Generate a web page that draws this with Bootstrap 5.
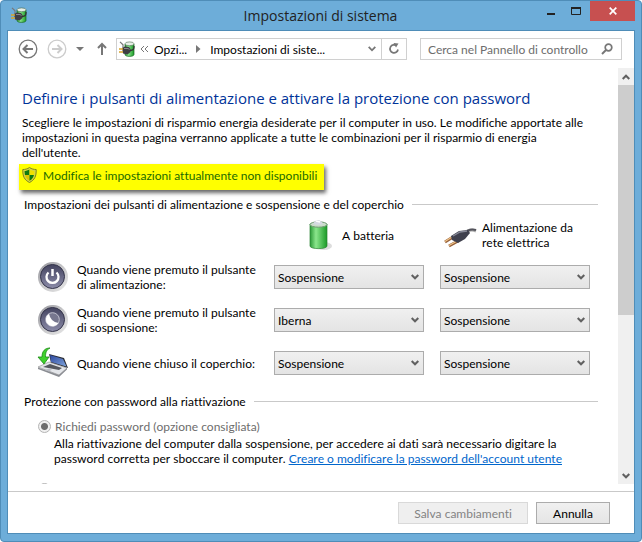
<!DOCTYPE html>
<html lang="it">
<head>
<meta charset="utf-8">
<meta name="viewport" content="width=device-width, initial-scale=1">
<title>Impostazioni di sistema</title>
<link rel="stylesheet" href="https://cdn.jsdelivr.net/npm/bootstrap@5.3.0/dist/css/bootstrap.min.css">
<style>
  :root { --frame: #6dadd9; --frame-edge: #4f8db8; --rule: #c9c9c9; }
  body { font-family: Lato, "Open Sans", sans-serif; font-size: 12px; line-height: 15px; font-variant-ligatures: none; font-kerning: none; color: #000; background: #fff; }
  svg { display: block; flex: none; }
  button { font: inherit; }
  .window { height: 100vh; background: var(--frame); border: 1px solid var(--frame-edge); border-radius: 4px; padding: 0 6px 7px; }
  .titlebar { height: 29px; flex: none; }
  .titlebar h1 { font-family: "Open Sans", sans-serif; font-size: 14px; line-height: 30px; font-weight: 400; color: #222; padding-left: 76px; }
  .caption-btn { border: 0; background: none; padding: 0; height: 20px; width: 25px; display: flex; align-items: center; justify-content: center; }
  .caption-close { background: #c75050; width: 45px; margin-left: 2px; }
  .client { border: 1px solid var(--frame-edge); background: #fff; min-height: 0; }
  .navrow { padding: 7px 12px 8px 10px; gap: 9px; }
  .bare { border: 0; background: none; padding: 0; color: #777; }
  .box { border: 1px solid #d0d0d0; height: 22px; }
  .address { gap: 5px; padding-left: 2px; }
  .refresh { border: 0; border-left: 1px solid #d0d0d0; background: none; width: 25px; height: 20px; padding: 0 6px; }
  .search { width: 202px; padding: 0 8px 0 7px; }
  .search input { border: 0; outline: 0; padding: 0; width: 100%; min-width: 0; color: #6d6d6d; background: none; font-variant-ligatures: none; }
  .search input::placeholder { color: #6d6d6d; opacity: 1; }
  .body-row { min-height: 0; margin-bottom: 7px; }
  .pane { min-height: 0; overflow: hidden; padding: 20px 20px 0 14px; }
  .pane h2 { font-family: "Open Sans", sans-serif; font-size: 15px; line-height: 20px; font-weight: 400; color: #039; margin: 0 0 7px; }
  .intro { margin: 0 0 4px; padding-right: 8px; }
  .uac { display: inline-flex; align-items: center; gap: 6px; background: #ff0; height: 26px; padding: 0 7px 4px 3px; margin-left: -3px; color: #1a6a00; text-decoration: none; box-shadow: 2px 3px 4px rgba(0,0,0,.6); }
  .group-head { font-size: 12px; font-weight: 400; line-height: 15px; margin: 7px 0 0; padding-left: 2px; gap: 8px; }
  .group-head::after { content: ""; flex: 1; border-top: 1px solid var(--rule); }
  .power-grid { display: grid; grid-template-columns: minmax(0, 1fr) 150px 150px; column-gap: 16px; row-gap: 13px; align-items: center; padding: 9px 8px 0 15px; }
  .power-grid .item { display: flex; align-items: center; gap: 8px; height: 30px; }
  .col-title { display: flex; align-items: center; height: 28px; }
  .combo { appearance: none; width: 100%; height: 24px; border: 1px solid #acacac; border-radius: 0; padding: 0 20px 0 3px; color: #000; font: inherit; font-variant-ligatures: none; font-kerning: none;
    background: url("data:image/svg+xml,%3Csvg xmlns='http://www.w3.org/2000/svg' width='8' height='6'%3E%3Cpath d='M.7 1L4 4.3 7.3 1' fill='none' stroke='%23606060' stroke-width='2'/%3E%3C/svg%3E") no-repeat right 4px center, linear-gradient(#f0f0f0, #e4e4e4); }
  .option { display: flex; align-items: center; gap: 4px; padding-left: 16px; margin-top: 10px; color: #6d6d6d; }
  .dial { appearance: none; width: 13px; height: 13px; border: 1px solid #b4b4b4; border-radius: 50%; margin: 0; background: #f4f4f4; flex: none; }
  .dial:checked { background: radial-gradient(circle, #6c6c6c 3px, #f0f0f0 4px); }
  .option-text { margin: 2px 0 17px 32px; }
  .option-text a { color: #06c; }
  .scrollbar { width: 16px; background: #f0f0f0; }
  .scrollbar button { height: 17px; display: flex; align-items: center; justify-content: center; }
  .thumb { flex: 231; background: #cdcdcd; }
  .track { flex: 152; }
  .actions { border-top: 1px solid var(--rule); padding: 10px 24px 9px; gap: 8px; }
  .cmd { height: 22px; border: 1px solid #acacac; background: linear-gradient(#f0f0f0, #e5e5e5); color: #000; width: 74px; padding: 0; }
  .cmd:disabled { background: #efefef; border-color: #d9d9d9; color: #838383; width: 130px; }
</style>
</head>
<body>
<svg width="0" height="0" class="position-absolute" aria-hidden="true">
  <defs>
    <linearGradient id="gGreen"><stop offset="0" stop-color="#2c9a38"/><stop offset=".35" stop-color="#8be68c"/><stop offset="1" stop-color="#1a9a26"/></linearGradient>
    <linearGradient id="gDial" x1="0" y1="0" x2="0" y2="1"><stop offset="0" stop-color="#43435f"/><stop offset="1" stop-color="#8c8ca9"/></linearGradient>
    <linearGradient id="gRing" x1="0" y1="0" x2="1" y2="1"><stop offset="0" stop-color="#8f8f96"/><stop offset=".5" stop-color="#c8c8ca"/><stop offset="1" stop-color="#e8e8e8"/></linearGradient>
    <linearGradient id="gScreen" x1="0" y1="0" x2="1" y2="1"><stop offset="0" stop-color="#2c479e"/><stop offset="1" stop-color="#7fa4dc"/></linearGradient>
    <symbol id="powerIcon" viewBox="0 0 16 16">
      <path d="M6 3v10.500c0 2.500 9 2.500 9 0V3z" fill="url(#gGreen)" stroke="#14661c" stroke-width=".7"/>
      <ellipse cx="10.500" cy="2.800" rx="4.500" ry="1.900" fill="#e8f0e8" stroke="#4d6b50" stroke-width=".6"/>
      <path d="M1 .8l3 3v3" fill="none" stroke="#777" stroke-width="1.200"/>
      <path d="M3 7l3-1.500 4 .5 1.500 2v3L8.500 13.500 4 12.500z" fill="#3e3e42"/>
      <path d="M5 7.500h4l1.500 1" fill="none" stroke="#99999e" stroke-width=".8"/>
      <path d="M0 8h4M0 11h4" stroke="#d8a428" stroke-width="1.700"/>
      <path d="M11 9.500c3 0 4.300-1 4-4.500" fill="none" stroke="#333" stroke-width="1.300"/>
    </symbol>
  </defs>
</svg>
<div class="window d-flex flex-column">
  <header class="titlebar d-flex">
    <svg width="16" height="18" class="mt-1 ms-1"><use href="#powerIcon" y="2" width="16" height="16"/></svg>
    <h1 class="m-0 flex-fill text-center">Impostazioni di sistema</h1>
    <button class="caption-btn" aria-label="Riduci a icona"><svg width="10" height="12"><path d="M1 9h8" stroke="#222" stroke-width="2"/></svg></button>
    <button class="caption-btn" aria-label="Ingrandisci"><svg width="10" height="8"><path d="M.5 1v6.500h9V1" fill="none" stroke="#222"/><path d="M0 1h10" stroke="#222" stroke-width="2"/></svg></button>
    <button class="caption-btn caption-close" aria-label="Chiudi"><svg width="8" height="8"><path d="M.7.7l6.600 6.600M7.300.7L.7 7.300" stroke="#fff" stroke-width="1.700"/></svg></button>
  </header>
  <main class="client d-flex flex-column flex-fill">
    <nav class="navrow d-flex align-items-center" aria-label="Navigazione">
      <button class="bare" aria-label="Indietro"><svg width="20" height="20"><circle cx="10" cy="10" r="8.800" fill="none" stroke="#777" stroke-width="1.300"/><path d="M15 10H6M9.500 6L5.500 10l4 4" fill="none" stroke="#777" stroke-width="2"/></svg></button>
      <button class="bare" aria-label="Avanti"><svg width="20" height="20"><circle cx="10" cy="10" r="8.800" fill="none" stroke="#ccc" stroke-width="1.300"/><path d="M5 10h9M10.500 6l4 4-4 4" fill="none" stroke="#ccc" stroke-width="2"/></svg></button>
      <button class="bare" aria-label="Percorsi recenti"><svg width="8" height="4"><path d="M0 0h8L4 4z" fill="#777"/></svg></button>
      <button class="bare ms-1" aria-label="Livello superiore"><svg width="10" height="14"><path d="M5 13V2M1 6l4-4 4 4" fill="none" stroke="#777" stroke-width="2"/></svg></button>
      <div class="box address d-flex align-items-center flex-fill">
        <svg width="16" height="16"><use href="#powerIcon"/></svg>
        <svg width="9" height="8"><path d="M4 1L1 4l3 3M8 1L5 4l3 3" fill="none" stroke="#777"/></svg>
        <span>Opzi...</span>
        <svg width="5" height="8" class="mx-1"><path d="M0 0l4.500 4L0 8z" fill="#777"/></svg>
        <span class="flex-fill">Impostazioni di siste...</span>
        <button class="bare" aria-label="Percorsi precedenti"><svg width="8" height="6"><path d="M.7.8L4 4.300 7.300.8" fill="none" stroke="#777" stroke-width="1.800"/></svg></button>
        <button class="refresh" aria-label="Aggiorna"><svg width="12" height="12"><path d="M8.500 2.700A4 4 0 1 0 10 6.500" fill="none" stroke="#777" stroke-width="1.700"/><path d="M5.500 0l5 .5-2.500 4z" fill="#777"/></svg></button>
      </div>
      <label class="box search d-flex align-items-center ms-1">
        <input type="text" placeholder="Cerca nel Pannello di controllo" aria-label="Cerca nel Pannello di controllo">
        <svg width="12" height="12"><circle cx="7.500" cy="4.500" r="3.300" fill="none" stroke="#777" stroke-width="1.700"/><path d="M5 7L1 11" stroke="#777" stroke-width="2"/></svg>
      </label>
    </nav>
    <div class="body-row d-flex flex-fill">
      <section class="pane flex-fill">
        <h2>Definire i pulsanti di alimentazione e attivare la protezione con password</h2>
        <p class="intro">Scegliere le impostazioni di risparmio energia desiderate per il computer in uso. Le modifiche apportate alle impostazioni in questa pagina verranno applicate a tutte le combinazioni per il risparmio di energia dell'utente.</p>
        <a class="uac" href="#"><svg width="15" height="16" viewBox="0 0 15 16"><path d="M7.500.5C5.500 2 3 2.500.8 2.500c-.2 7 1.700 10.500 6.700 13 5-2.500 6.900-6 6.700-13C12 2.500 9.500 2 7.500.5z" fill="#d8d840" stroke="#7c8420"/><path d="M7.500 2.500C6 3.300 4 4 2.600 4c0 1.500.1 2.800.4 4h4.500z" fill="#117a10"/><path d="M7.500 2.500C9 3.300 11 4 12.400 4c0 1.500-.1 2.800-.4 4H7.500z" fill="#f0e000"/><path d="M3 8h4.500v5.700C5 12.500 3.600 10.500 3 8z" fill="#e0c400"/><path d="M12 8H7.500v5.700C10 12.500 11.400 10.500 12 8z" fill="#117a10"/></svg><span>Modifica le impostazioni attualmente non disponibili</span></a>
        <h3 class="group-head d-flex align-items-center">Impostazioni dei pulsanti di alimentazione e sospensione e del coperchio</h3>
        <div class="power-grid">
          <span></span>
          <div class="col-title"><svg width="68" height="32" viewBox="0 1 68 32"><ellipse cx="50" cy="28" rx="8" ry="4" fill="#ddd"/><path d="M36 6v22c0 3.500 17 3.500 17 0V6z" fill="url(#gGreen)" stroke="#2c8433" stroke-width=".7"/><ellipse cx="44.500" cy="6.500" rx="8.500" ry="2.700" fill="#cbdcca" stroke="#6f9a73"/><path d="M39 6q2-4 5-4t5 4q-5 2-10 0z" fill="#d5d9e2"/><path d="M42 3l4 1" stroke="#fff" stroke-width="1.500"/></svg><span>A batteria</span></div>
          <div class="col-title"><svg width="42" height="34"><path d="M23 17q6-7 13-4" fill="none" stroke="#aaa" stroke-width="3"/><path d="M23 16q6-6 13-4" fill="none" stroke="#54545c" stroke-width="2"/><path d="M5 24l8-5M9 28l9-5" stroke="#96603a" stroke-width="3"/><path d="M5 23.500l7-4.500M9 27.500l8-4.500" stroke="#f0c58a" stroke-width="1.200"/><path d="M11 18l8-5 9-1 2 3-5 6-7 4-6-3z" fill="#3f404d"/><path d="M13 18l7-4 7-1" fill="none" stroke="#878997" stroke-width="1.300"/></svg><span>Alimentazione da<br>rete elettrica</span></div>

          <div class="item"><svg width="32" height="32"><circle cx="16" cy="16" r="15" fill="url(#gRing)"/><circle cx="15.500" cy="15.500" r="12" fill="url(#gDial)" stroke="#34344a"/><path d="M11.500 11.500a6 6 0 1 0 8 0" fill="none" stroke="#fff" stroke-width="2.300"/><path d="M15.500 8v7" stroke="#fff" stroke-width="2.500"/></svg><span>Quando viene premuto il pulsante<br>di alimentazione:</span></div>
          <select class="combo" aria-label="Pulsante di alimentazione, a batteria"><option>Sospensione</option></select>
          <select class="combo" aria-label="Pulsante di alimentazione, rete elettrica"><option>Sospensione</option></select>

          <div class="item"><svg width="32" height="32"><circle cx="16" cy="16" r="15" fill="url(#gRing)"/><circle cx="15.500" cy="15.500" r="12" fill="url(#gDial)" stroke="#34344a"/><circle cx="15.500" cy="15.500" r="6.800" fill="#77778f" stroke="#c2c2d0"/><path d="M12 9.700a6.800 6.800 0 1 0 9.500 9.200q-8-1-9.500-9.200z" fill="#fff"/></svg><span>Quando viene premuto il pulsante<br>di sospensione:</span></div>
          <select class="combo" aria-label="Pulsante di sospensione, a batteria"><option>Iberna</option></select>
          <select class="combo" aria-label="Pulsante di sospensione, rete elettrica"><option>Sospensione</option></select>

          <div class="item"><svg width="32" height="32"><path d="M12 7l15 4 4 10-17-5z" fill="#2a2c33"/><path d="M13 8l13 4 3.500 7.500L14 15z" fill="url(#gScreen)"/><path d="M1 20l11-5 18 6-8 7z" fill="#e4e6ea" stroke="#888" stroke-width=".6"/><path d="M6 20l7-3 12 4-3 2z" fill="#55585f"/><path d="M1 20.500l21 7.500 8-7v1.500L22 30 1 22z" fill="#8a8c92"/><path d="M8 23l4-1.500 3 1.200-3 1.500z" fill="#b9bcc4"/><path d="M13 1C8 1 5 4 5 10H1l6 7 5-7H8.500C8.500 6 9 3 13 1z" fill="#3fd12c" stroke="#1a8a14" stroke-width=".8"/></svg><span>Quando viene chiuso il coperchio:</span></div>
          <select class="combo" aria-label="Chiusura del coperchio, a batteria"><option>Sospensione</option></select>
          <select class="combo" aria-label="Chiusura del coperchio, rete elettrica"><option>Sospensione</option></select>
        </div>
        <h3 class="group-head d-flex align-items-center mt-3">Protezione con password alla riattivazione</h3>
        <label class="option"><input class="dial" type="radio" name="pwd" checked disabled><span>Richiedi password (opzione consigliata)</span></label>
        <p class="option-text">Alla riattivazione del computer dalla sospensione, per accedere ai dati sarà necessario digitare la password corretta per sboccare il computer. <a href="#">Creare o modificare la password dell'account utente</a></p>
        <label class="option"><input class="dial" type="radio" name="pwd" disabled aria-label="Seconda opzione"></label>
      </section>
      <div class="scrollbar d-flex flex-column flex-shrink-0">
        <button class="bare" aria-label="Scorri su"><svg width="8" height="6"><path d="M.7 5L4 1.700 7.300 5" fill="none" stroke="#606060" stroke-width="2"/></svg></button>
        <div class="thumb"></div><div class="track"></div>
        <button class="bare" aria-label="Scorri giù"><svg width="8" height="6"><path d="M.7 1L4 4.300 7.300 1" fill="none" stroke="#606060" stroke-width="2"/></svg></button>
      </div>
    </div>
    <footer class="actions d-flex justify-content-end">
      <button class="cmd" disabled>Salva cambiamenti</button>
      <button class="cmd">Annulla</button>
    </footer>
  </main>
</div>
<script src="https://cdn.jsdelivr.net/npm/bootstrap@5.3.0/dist/js/bootstrap.bundle.min.js"></script>
</body>
</html>
